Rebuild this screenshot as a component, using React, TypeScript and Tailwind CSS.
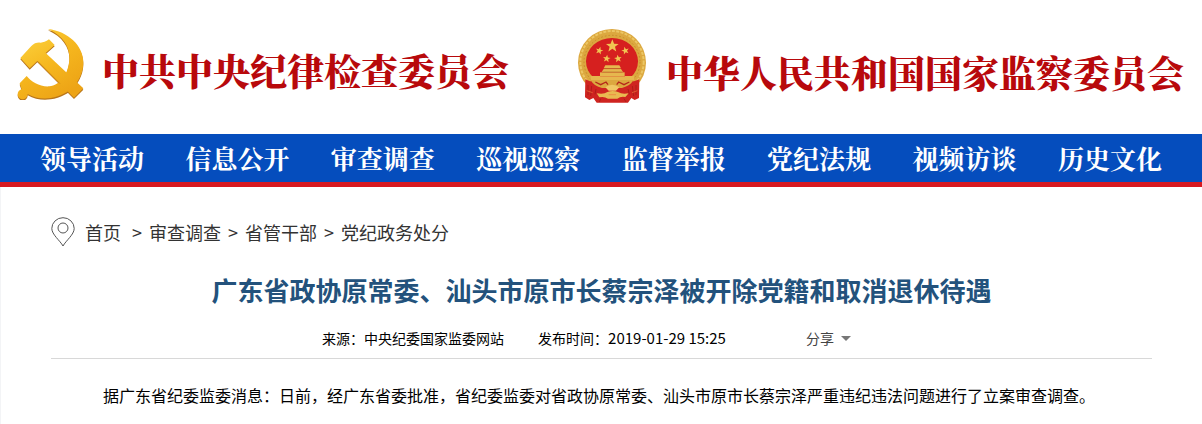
const navItems = ["领导活动", "信息公开", "审查调查", "巡视巡察", "监督举报", "党纪法规", "视频访谈", "历史文化"];

const crumbs = ["审查调查", "省管干部", "党纪政务处分"];

const SICKLE =
  "M144 45C190 66 211 100 208 138C204 182 180 214 148 217C120 219 94 204 80 186L59 208L65 226A15 15 0 1 0 83 240C104 252 130 256 152 252C212 244 250 196 250 145C250 95 204 52 144 45Z";
const HAMMER = "M61 132L89 163L112 141L222 251L250 223L137 117L164 93L147 76Q133 86 122 86Q106 84 94 96Z";

const PartyEmblem = () => (
  <svg className="w-[68px] h-[72px] shrink-0" viewBox="48 42 204 216" aria-hidden="true">
    <defs>
      <linearGradient id="gold" x1="0" y1="0" x2="0.6" y2="1">
        <stop offset="0" stopColor="#fbd03c" />
        <stop offset="0.5" stopColor="#f6b81f" />
        <stop offset="1" stopColor="#eda416" />
      </linearGradient>
    </defs>
    {/* shaded edge under the gold faces */}
    <g fill="#b8751a" transform="translate(0 4)">
      <path d={SICKLE} />
      <path d={HAMMER} />
    </g>
    <g fill="url(#gold)">
      <path d={SICKLE} />
      <path d={HAMMER} />
    </g>
    <path d="M114 143L180 209" fill="none" stroke="#d28c18" strokeWidth="3" />
  </svg>
);

const STAR = "0,-10 2.6,-3.2 9.5,-3.1 4,1.2 5.9,8.1 0,4.1 -5.9,8.1 -4,1.2 -9.5,-3.1 -2.6,-3.2";

const NationalEmblem = () => (
  <svg className="w-[70px] h-[76px] shrink-0" viewBox="37 36 210 228" aria-hidden="true">
    {/* wheat ring */}
    <ellipse cx="142" cy="140" rx="102" ry="101" fill="#dca83f" />
    <ellipse cx="142" cy="138" rx="95" ry="93" fill="none" stroke="#ecc765" strokeWidth="6" strokeDasharray="9 4" />
    <ellipse cx="142" cy="138" rx="84" ry="80" fill="none" stroke="#c68c2c" strokeWidth="3" strokeDasharray="5 6" />
    {/* field */}
    <ellipse cx="142" cy="136" rx="78" ry="70" fill="#d6201f" />
    <g fill="#f1c552">
      <polygon points={STAR} transform="translate(143 90) scale(2)" />
      <polygon points={STAR} transform="translate(104 104) rotate(15) scale(1.2)" />
      <polygon points={STAR} transform="translate(182 104) rotate(-15) scale(1.2)" />
      <polygon points={STAR} transform="translate(126 128) rotate(8) scale(1.2)" />
      <polygon points={STAR} transform="translate(160 128) rotate(-8) scale(1.2)" />
    </g>
    {/* gate tower */}
    <g fill="#e6b74e">
      <path d="M122 148H164L169 157H117Z" />
      <path d="M117 159H169L175 168H111Z" />
      <path d="M106 169H180V182H106Z" />
      <path d="M78 180H106V182H180V180H208V192H78Z" />
    </g>
    <path d="M119 158H167M113 168H173" stroke="#b4762a" strokeWidth="2" />
    {/* drapes */}
    <path d="M62 190L76 196H208L224 190L223 246L210 252L200 246L190 260H96L86 246L74 252L61 244Z" fill="#cf2420" />
    <path d="M78 192H206Q198 209 172 216H112Q88 211 78 192Z" fill="#dca83f" />
    <path d="M92 198L108 206L124 198L130 206M194 198L178 206L162 198L156 206" fill="none" stroke="#b5281b" strokeWidth="4" />
    <path d="M122 214Q142 198 164 214L154 224H132Z" fill="#f0c765" />
    <path d="M96 232Q118 236 128 228Q144 222 160 228Q172 236 192 232L182 243Q168 240 158 248H130Q118 240 104 244Z" fill="#e9b951" />
    <path d="M70 207V237M81 210L78 240M94 219L91 235M214 207V237M203 210L207 240M190 219L194 235M108 248L104 258M178 248L184 258" stroke="#9d1a15" strokeWidth="2" />
    <path d="M66 224L84 230M218 224L202 230M132 236H154" stroke="#ef7a3b" strokeWidth="2" />
  </svg>
);

const PinIcon = () => (
  <svg className="w-6 h-[30px] shrink-0" viewBox="0 0 24 30" fill="none" stroke="#555" aria-hidden="true">
    <path d="M12 29C9 23.500 .8 17.500 .8 11.500A11.200 10.800 0 0 1 23.200 11.500C23.200 17.500 15 23.500 12 29Z" />
    <circle cx="12" cy="11" r="5" />
  </svg>
);

const Header = () => (
  <header className="flex items-start justify-between pt-7 pl-4 pr-[18px] h-[134px] text-[37px] leading-[44px] font-black text-[#b8090c] font-['Noto_Serif_CJK_SC','Noto_Sans_CJK_SC',serif] whitespace-nowrap">
    <a href="#" className="flex items-center gap-[18px]">
      <PartyEmblem />
      <span className="pt-3">中共中央纪律检查委员会</span>
    </a>
    <a href="#" className="flex items-center gap-[19px]">
      <NationalEmblem />
      <span className="pt-3">中华人民共和国国家监察委员会</span>
    </a>
  </header>
);

const Nav = () => (
  <nav className="flex items-center justify-between px-10 h-[53px] bg-[#054dbd] border-b-5 border-[#d71920] text-[26px] leading-8 font-bold text-white font-['Noto_Serif_CJK_SC','Noto_Sans_CJK_SC',serif] whitespace-nowrap">
    {navItems.map((item) => (
      <a key={item} href="#">
        {item}
      </a>
    ))}
  </nav>
);

const App = () => {
  return (
    <div className="bg-white text-black font-['Noto_Sans_CJK_SC',sans-serif]">
      <Header />
      <Nav />
      <main className="px-[50px] pb-4 border-l border-gray-100">
        {/* Breadcrumb */}
        <div className="flex items-center pt-[30px] text-lg leading-[30px] text-[#333]">
          <PinIcon />
          <a href="#" className="ml-[10px] mr-1">
            首页
          </a>
          {crumbs.map((crumb) => (
            <span key={crumb} className="flex">
              <span className="mx-[7px]">&gt;</span>
              <a href="#">{crumb}</a>
            </span>
          ))}
        </div>

        <h1 className="mt-[23px] text-center text-[26px] leading-10 font-bold text-[#23527c]">
          广东省政协原常委、汕头市原市长蔡宗泽被开除党籍和取消退休待遇
        </h1>

        {/* Source, time, share */}
        <div className="flex items-center justify-center mt-4 pb-2 border-b border-[#d8d8d8] text-sm leading-[24px]">
          <span>来源：中央纪委国家监委网站</span>
          <span className="ml-[34px] flex">
            发布时间：<time className="text-[15px]">2019-01-29 15:25</time>
          </span>
          <button type="button" className="ml-20 mr-[30px] flex items-center gap-[7px] text-[#444]">
            分享
            <span className="border-x-5 border-t-5 border-x-transparent border-t-[#777]" />
          </button>
        </div>

        <p className="mt-[22px] text-base leading-7 indent-[52px]">
          据广东省纪委监委消息：日前，经广东省委批准，省纪委监委对省政协原常委、汕头市原市长蔡宗泽严重违纪违法问题进行了立案审查调查。
        </p>
      </main>
    </div>
  );
};

export default App;
